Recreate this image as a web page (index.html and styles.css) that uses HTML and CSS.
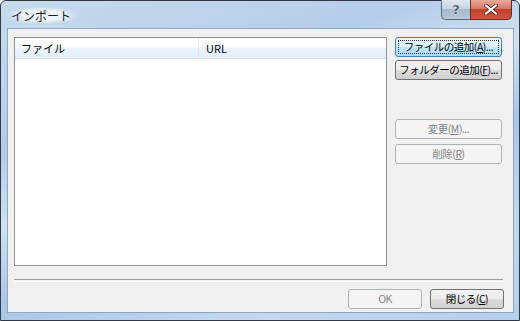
FILE: index.html
```html
<!DOCTYPE html>
<html lang="ja">
<head>
    <meta charset="UTF-8">
    <title>インポート</title>
    <link rel="stylesheet" href="styles.css">
</head>
<body>
    <div class="window">
        <div class="titlebar">
            <span class="title">インポート</span>
            <div class="caption-buttons">
                <div class="caption-btn help-btn">?</div>
                <div class="caption-btn close-btn">
                    <svg width="14" height="11" viewBox="0 0 14 11">
                        <path d="M2 1.5 L12 9.5 M12 1.5 L2 9.5" stroke="#4a1a1a" stroke-width="3.6" stroke-linecap="square"/>
                        <path d="M2 1.5 L12 9.5 M12 1.5 L2 9.5" stroke="#ffffff" stroke-width="2.2" stroke-linecap="square"/>
                    </svg>
                </div>
            </div>
        </div>

        <div class="client">
            <div class="main-row">
                <div class="listview">
                    <div class="lv-header">
                        <div class="lv-col col-file">ファイル</div>
                        <div class="lv-col col-url">URL</div>
                    </div>
                </div>

                <div class="side-buttons">
                    <button class="dlg-button default-btn"><span class="focus-rect"><span class="btn-label">ファイルの追加(<u>A</u>)...</span></span></button>
                    <button class="dlg-button"><span class="btn-label">フォルダーの追加(<u>F</u>)...</span></button>
                    <button class="dlg-button disabled-btn spaced"><span class="btn-label">変更(<u>M</u>)...</span></button>
                    <button class="dlg-button disabled-btn"><span class="btn-label">削除(<u>R</u>)</span></button>
                </div>
            </div>

            <div class="separator"></div>

            <div class="footer">
                <button class="dlg-button footer-btn disabled-btn"><span class="btn-label">OK</span></button>
                <button class="dlg-button footer-btn"><span class="btn-label">閉じる(<u>C</u>)</span></button>
            </div>
        </div>
    </div>
</body>
</html>
```

FILE: styles.css
```css
body {
    margin: 0;
    padding: 0;
    background-color: #ffffff;
    font-family: "Noto Sans CJK JP", "Noto Sans", sans-serif;
    font-size: 11px;
    color: #000;
}

.window {
    width: 520px;
    height: 321px;
    box-sizing: border-box;
    border: 1px solid #2f3a46;
    border-radius: 6px 6px 0 0;
    padding: 0 5px 7px 6px;
    display: flex;
    flex-direction: column;
    background: linear-gradient(160deg, #c7daee 0%, #b4cde8 30%, #cfe0f1 45%, #a9c6e6 60%, #c3d8ee 80%, #b6cfea 100%);
}

.titlebar {
    height: 27px;
    display: flex;
    align-items: flex-start;
    justify-content: space-between;
}

.title {
    margin-top: 6px;
    margin-left: 2px;
    padding: 0 6px 0 2px;
    font-size: 12px;
    color: #1e1e1e;
    background: radial-gradient(ellipse at center, rgba(255, 255, 255, 0.7) 40%, rgba(255, 255, 255, 0) 75%);
}

.caption-buttons {
    display: flex;
    margin-top: -1px;
    margin-right: 2px;
}

.caption-btn {
    height: 20px;
    box-sizing: border-box;
    border: 1px solid #5a6b80;
    border-top: none;
    display: flex;
    align-items: center;
    justify-content: center;
}

.help-btn {
    width: 29px;
    border-radius: 0 0 0 5px;
    border-right: none;
    background: linear-gradient(#dfe7f0 0%, #c9d4e1 45%, #a9b8ca 50%, #b9c8d9 100%);
    font-family: "DejaVu Sans", sans-serif;
    font-size: 13px;
    font-weight: bold;
    color: #56677c;
    text-shadow: 0 0 2px #ffffff;
}

.close-btn {
    width: 42px;
    border-radius: 0 0 5px 0;
    border-color: #6b2620;
    background: linear-gradient(#e9a99a 0%, #d67a6a 45%, #c2402c 50%, #d2563f 100%);
}

.client {
    flex: 1;
    background-color: #f0f0f0;
    border: 1px solid #8ea6c2;
    padding: 8px 8px 0 6px;
    display: flex;
    flex-direction: column;
}

.main-row {
    display: flex;
    gap: 8px;
}

.listview {
    width: 373px;
    height: 229px;
    box-sizing: border-box;
    border: 1px solid #8e9399;
    background-color: #ffffff;
}

.lv-header {
    display: flex;
    height: 20px;
    border-bottom: 1px solid #dde2e8;
    background: linear-gradient(#ffffff 0%, #ffffff 45%, #eaf2fa 50%, #e6eef8 100%);
}

.lv-col {
    display: flex;
    align-items: center;
    padding-left: 6px;
    box-sizing: border-box;
}

.col-file {
    width: 184px;
    border-right: 1px solid #e3e6ea;
}

.col-url {
    flex: 1;
    padding-left: 7px;
}

.side-buttons {
    display: flex;
    flex-direction: column;
    gap: 3px;
}

.dlg-button {
    width: 107px;
    height: 20px;
    box-sizing: border-box;
    padding: 0;
    border: 1px solid #707070;
    border-radius: 3px;
    background: linear-gradient(#f2f2f2 0%, #ebebeb 48%, #dddddd 52%, #cfcfcf 100%);
    font-family: "Noto Sans CJK JP", "Noto Sans", sans-serif;
    font-size: 10.5px;
    color: #000;
    display: flex;
    align-items: center;
    justify-content: center;
}

.btn-label {
    white-space: nowrap;
    letter-spacing: -0.5px;
    line-height: 1;
}

.default-btn {
    border-color: #3c7fb1;
    background: linear-gradient(#eaf6fd 0%, #d9f0fc 48%, #bee6fd 52%, #a7d9f5 100%);
    padding: 2px;
}

.focus-rect {
    flex: 1;
    align-self: stretch;
    display: flex;
    align-items: center;
    justify-content: center;
    border: 1px dotted #333;
}

.disabled-btn {
    border-color: #adb2b5;
    background: #f4f4f4;
    color: #838383;
}

.spaced {
    margin-top: 36px;
    margin-bottom: 2px;
}

.separator {
    margin-top: 13px;
    margin-right: 2px;
    height: 1px;
    border-top: 1px solid #a0a0a0;
    border-bottom: 1px solid #ffffff;
}

.footer {
    display: flex;
    justify-content: flex-end;
    gap: 8px;
    margin-top: 7px;
    margin-right: 1px;
}

.footer-btn {
    width: 74px;
}
```
